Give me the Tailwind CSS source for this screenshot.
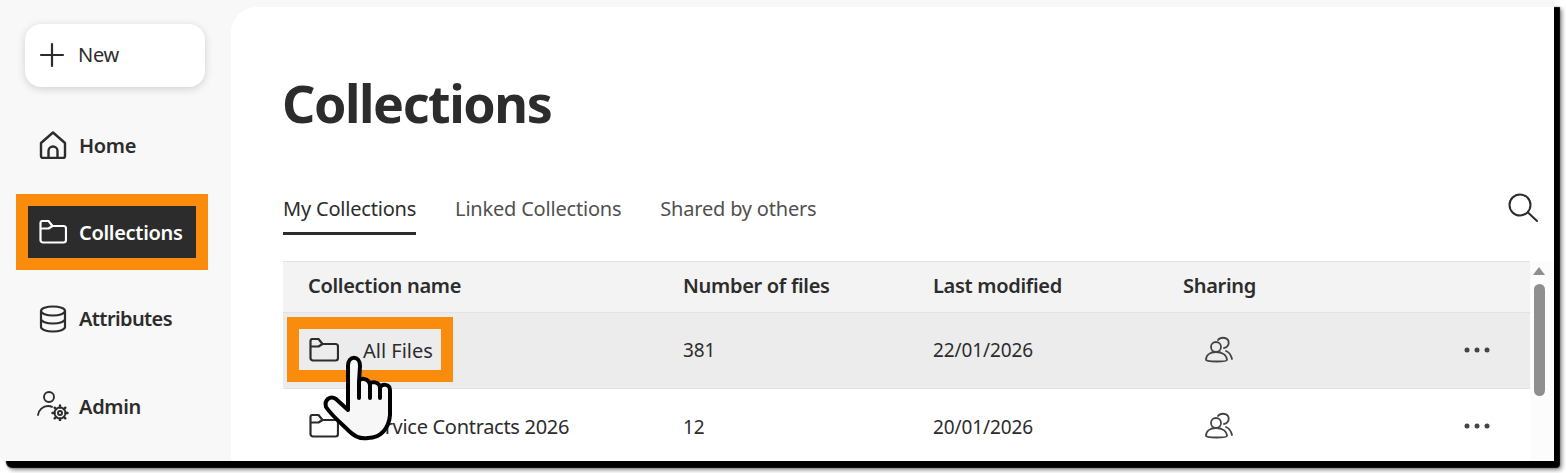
<!DOCTYPE html>
<html lang="en">
<head>
    <meta charset="UTF-8">
    <meta name="viewport" content="width=device-width, initial-scale=1.0">
    <title>Collections</title>
    <script src="https://cdn.jsdelivr.net/npm/@tailwindcss/browser@4"></script>
</head>
<body class="bg-white h-[473px] font-['Noto_Sans',sans-serif] text-[#2c2c2c]">
    <div class="relative w-[1554px] h-[461px] flex bg-[#f8f8f8] rounded-bl-[6px] rounded-br-[4px] shadow-[6px_7px_1px_#000,8px_9px_4px_rgba(0,0,0,0.45)]">
        <!-- sidebar -->
        <aside class="w-[231px] shrink-0">
            <button class="ml-[25px] mt-[24px] w-[180px] h-[63px] flex items-center bg-white rounded-[16px] shadow-[0_2px_8px_rgba(0,0,0,0.16)] pl-[14px] pb-[2px] text-[20px] tracking-[-0.3px]">
                <svg class="w-[26px] h-[26px] mr-[13px]" viewBox="0 0 26 26" fill="none" stroke="#2c2c2c" stroke-width="2.200" stroke-linecap="round"><path d="M13 2v22M2 13h22"/></svg>
                New
            </button>
            <nav class="mt-[14px] text-[20px] font-semibold tracking-[-0.3px]">
                <div class="h-[87px] flex items-center pl-[39px]">
                    <svg class="w-[28px] h-[28px] mr-[12px]" viewBox="0 0 28 28" fill="none" stroke="#2c2c2c" stroke-width="2.400" stroke-linejoin="round"><path d="M2 12 14 1.500 26 12v13a2 2 0 0 1-2 2H4a2 2 0 0 1-2-2z"/><path d="M9.500 27v-7a4.500 4.500 0 0 1 9 0v7"/></svg>
                    <span class="mt-[2px]">Home</span>
                </div>
                <div class="h-[87px] flex items-center pl-[16px]">
                    <div class="w-[192px] h-[76px] border-[12px] border-[#f98c0d] bg-[#2c2c2c] text-white flex items-center pl-[11px]">
                        <svg class="w-[28px] h-[24px] mr-[12px]" viewBox="0 0 28 24" fill="none" stroke="#fff" stroke-width="2.200" stroke-linejoin="round"><path d="M1.500 8V3a2 2 0 0 1 2-2h6l4 5h11a2.500 2.500 0 0 1 2.500 2.500V20a2.500 2.500 0 0 1-2.500 2.500H4A2.500 2.500 0 0 1 1.500 20z"/><path d="M1.500 8.500h8l4-2.500"/></svg>
                        <span class="mt-[2px]">Collections</span>
                    </div>
                </div>
                <div class="h-[87px] flex items-center pl-[39px]">
                    <svg class="w-[28px] h-[28px] mr-[12px]" viewBox="0 0 28 28" fill="none" stroke="#2c2c2c" stroke-width="2.200"><ellipse cx="14" cy="6" rx="12" ry="4.500"/><path d="M2 6v16c0 2.500 5.400 4.500 12 4.500s12-2 12-4.500V6M2 14c0 2.500 5.400 4.500 12 4.500S26 16.500 26 14"/></svg>
                    <span class="tracking-[-0.6px]">Attributes</span>
                </div>
                <div class="h-[87px] flex items-center pl-[37px]">
                    <svg class="w-[32px] h-[30px] mr-[10px]" viewBox="0 0 32 30" fill="none" stroke="#2c2c2c" stroke-width="1.900" stroke-linecap="round"><circle cx="12" cy="6" r="5"/><path d="M1 24c.5-5 5-9 10-9 1.500 0 3 .3 4 .8"/><circle cx="23" cy="22" r="5.500"/><circle cx="23" cy="22" r="2"/><path stroke-width="2.400" d="M23 16.500V14.500M23 27.500V29.500M17.500 22H15.500M28.500 22H30.500M19.100 18.100 17.700 16.700M26.900 18.100 28.300 16.700M19.100 25.900 17.700 27.300M26.900 25.900 28.300 27.300"/></svg>
                    <span class="mt-[2px]">Admin</span>
                </div>
            </nav>
        </aside>

        <!-- main panel -->
        <main class="flex-1 mt-[7px] bg-white rounded-tl-[26px] pl-[52px] overflow-hidden">
            <h1 class="-ml-[1px] mt-[64px] h-[64px] leading-[64px] text-[52px] font-bold tracking-[-1.450px]">Collections</h1>
            <div class="mt-[50px] h-[50px] flex items-start justify-between pr-[16px]">
                <div class="flex gap-[39px] text-[20px] tracking-[-0.2px] text-[#505050]">
                    <span class="h-[50px] leading-[48px] border-b-[3px] border-[#2c2c2c] text-[#2c2c2c]">My Collections</span>
                    <span class="h-[50px] leading-[48px]">Linked Collections</span>
                    <span class="h-[50px] leading-[48px]">Shared by others</span>
                </div>
                <svg class="w-[30px] h-[30px] mt-[8px]" viewBox="0 0 30 30" fill="none" stroke="#2c2c2c" stroke-width="2" stroke-linecap="round"><circle cx="12" cy="12" r="10.500"/><path d="M20 19.500l9 8.500"/></svg>
            </div>
            <div class="mt-[26px] flex">
                <div class="w-[1247px] text-[20px]">
                    <div class="h-[52px] grid grid-cols-[375px_250px_250px_1fr] items-center bg-[#f3f3f3] border-y border-[#e2e2e2] font-semibold pl-[25px] pb-[3px] tracking-[-0.3px]">
                        <span>Collection name</span>
                        <span>Number of files</span>
                        <span>Last modified</span>
                        <span>Sharing</span>
                    </div>
                    <div class="h-[76px] grid grid-cols-[400px_250px_250px_1fr_auto] items-center bg-[#ececec] border-b border-[#e2e2e2] pr-[40px] pb-[2px]">
                        <div class="ml-[4px] w-[166px] h-[65px] border-[12px] border-[#f98c0d] flex items-center pl-[10px]">
                            <svg class="w-[30px] h-[24px] mr-[24px] shrink-0" viewBox="0 0 30 24" fill="none" stroke="#2c2c2c" stroke-width="2.200" stroke-linejoin="round"><path d="M1.500 8V3a2 2 0 0 1 2-2h6l4 5h13a2.500 2.500 0 0 1 2.500 2.500V20a2.500 2.500 0 0 1-2.500 2.500H4A2.500 2.500 0 0 1 1.500 20z"/><path d="M1.500 8.500h8l4-2.500"/></svg>
                            <span class="mt-[2px]">All Files</span>
                        </div>
                        <span class="mt-[2px] text-[19px] tracking-[-0.1px]">381</span>
                        <span class="mt-[2px] text-[19px] tracking-[-0.1px]">22/01/2026</span>
                        <span class="pl-[22px]"><svg class="w-[28px] h-[28px]" viewBox="0 0 28 28" fill="none" stroke="#444" stroke-width="1.800" stroke-linecap="round"><circle cx="11" cy="11" r="5"/><path d="M1 24c0-5 4-8 10-8s11 3 11 8c0 2-21 2-21 0z"/><path d="M13 4c2-3 8-3 10 0 2 4-1 8-4 8M21 15c3 1 5 4 6 8"/></svg></span>
                        <svg class="w-[26px] h-[6px]" viewBox="0 0 26 6" fill="#444"><circle cx="3" cy="3" r="2.500"/><circle cx="13" cy="3" r="2.500"/><circle cx="23" cy="3" r="2.500"/></svg>
                    </div>
                    <div class="h-[76px] grid grid-cols-[400px_250px_250px_1fr_auto] items-center pr-[40px] pb-[2px]">
                        <div class="flex items-center pl-[26px] tracking-[-0.3px]">
                            <svg class="w-[30px] h-[24px] mr-[24px] shrink-0" viewBox="0 0 30 24" fill="none" stroke="#2c2c2c" stroke-width="2.200" stroke-linejoin="round"><path d="M1.500 8V3a2 2 0 0 1 2-2h6l4 5h13a2.500 2.500 0 0 1 2.500 2.500V20a2.500 2.500 0 0 1-2.500 2.500H4A2.500 2.500 0 0 1 1.500 20z"/><path d="M1.500 8.500h8l4-2.500"/></svg>
                            <span class="mt-[2px]">Service Contracts 2026</span>
                        </div>
                        <span class="mt-[2px] text-[19px] tracking-[-0.1px]">12</span>
                        <span class="mt-[2px] text-[19px] tracking-[-0.1px]">20/01/2026</span>
                        <span class="pl-[22px]"><svg class="w-[28px] h-[28px]" viewBox="0 0 28 28" fill="none" stroke="#444" stroke-width="1.800" stroke-linecap="round"><circle cx="11" cy="11" r="5"/><path d="M1 24c0-5 4-8 10-8s11 3 11 8c0 2-21 2-21 0z"/><path d="M13 4c2-3 8-3 10 0 2 4-1 8-4 8M21 15c3 1 5 4 6 8"/></svg></span>
                        <svg class="w-[26px] h-[6px]" viewBox="0 0 26 6" fill="#444"><circle cx="3" cy="3" r="2.500"/><circle cx="13" cy="3" r="2.500"/><circle cx="23" cy="3" r="2.500"/></svg>
                    </div>
                </div>
                <!-- scrollbar -->
                <div class="w-[24px] h-[200px] bg-[#fcfcfc] flex flex-col items-center pr-[6px] pt-[6px]">
                    <div class="w-0 h-0 border-x-[6px] border-x-transparent border-b-[8px] border-b-[#8f8f8f]"></div>
                    <div class="mt-[9px] w-[11px] h-[112px] rounded-full bg-[#8f8f8f]"></div>
                </div>
            </div>
        </main>

        <!-- hand cursor over the row -->
        <svg class="absolute left-[320px] top-[350px] w-[80px] h-[95px]" viewBox="320 350 80 95" fill="#f7f7f7" stroke="#000" stroke-width="4" stroke-linejoin="round" stroke-linecap="round">
            <path d="M348 410 336 399C330 395 324 400 326 407 332 416 342 424 349 431 356 438 363 439 368 438 381 438 389 428 390 415L390 390C390 384 381 383 380 388 380 382 370 380 370 385 369 378 359 377 359 382L360 366C360 355 348 355 348 366Z"/>
            <path d="M359 382V398M370 385V398M380 388V398" fill="none"/>
        </svg>
    </div>
</body>
</html>
